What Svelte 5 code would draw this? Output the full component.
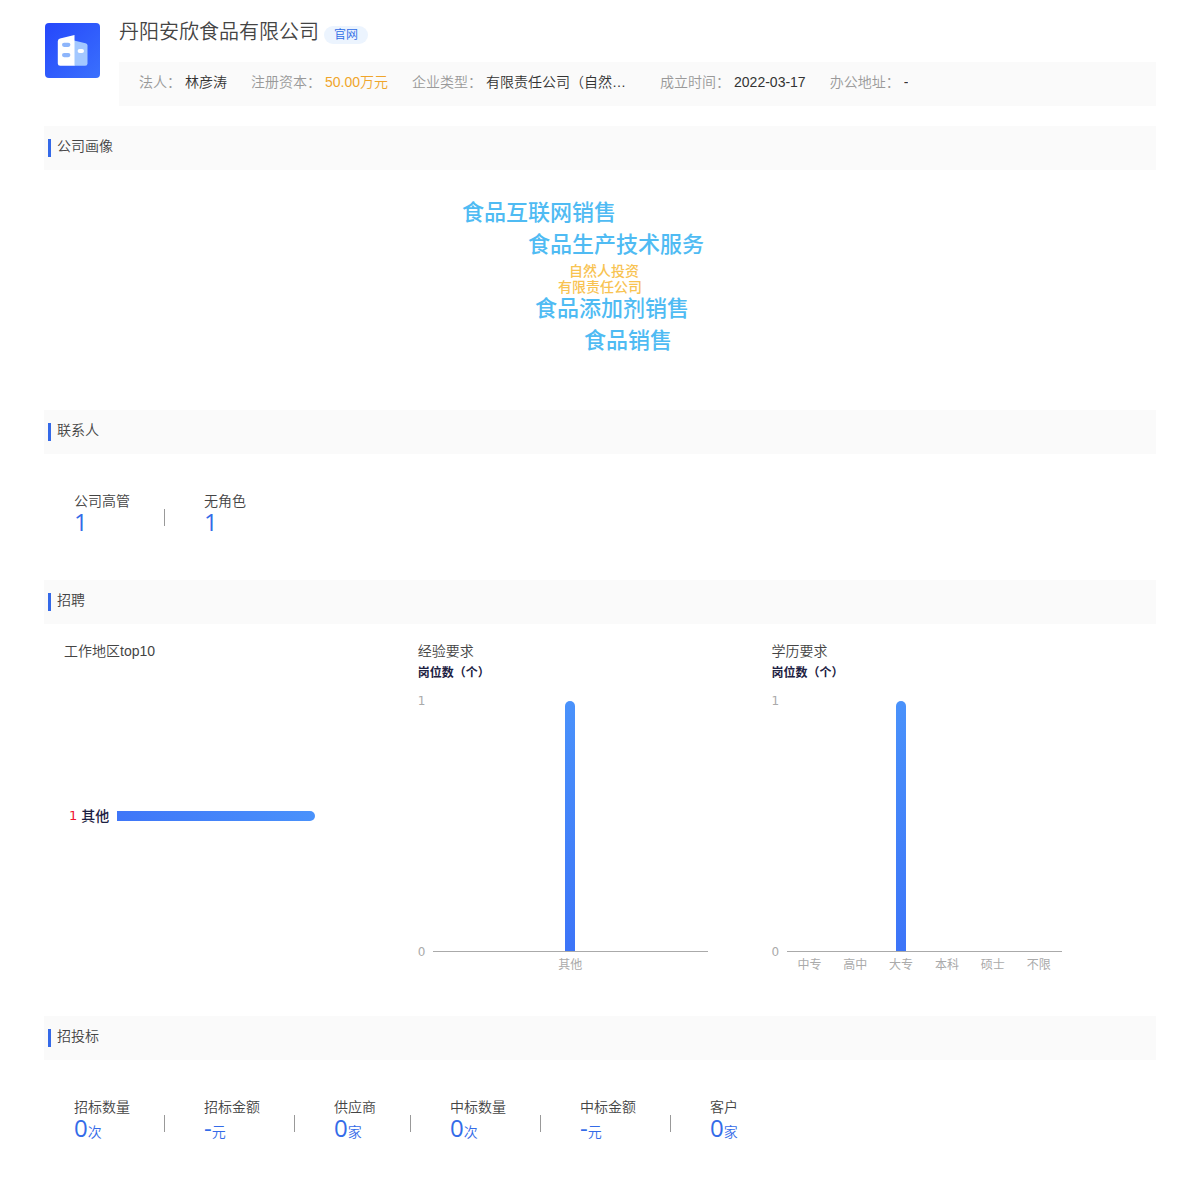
<script lang="ts">
  interface Stat {
    label: string;
    value: string;
    unit?: string;
  }

  const company = {
    name: "丹阳安欣食品有限公司",
    info: [
      { label: "法人", value: "林彦涛" },
      { label: "注册资本", value: "50.00万元", money: true },
      { label: "企业类型", value: "有限责任公司（自然人）" },
      { label: "成立时间", value: "2022-03-17" },
      { label: "办公地址", value: "-" },
    ],
  };

  // x is measured from the middle of the cloud, y from its top
  const words = [
    { text: "食品互联网销售", x: -138, y: 27, major: true },
    { text: "食品生产技术服务", x: -72, y: 59, major: true },
    { text: "自然人投资", x: -31, y: 85, major: false },
    { text: "有限责任公司", x: -42, y: 101, major: false },
    { text: "食品添加剂销售", x: -65, y: 123, major: true },
    { text: "食品销售", x: -16, y: 155, major: true },
  ];

  const contacts: Stat[] = [
    { label: "公司高管", value: "1" },
    { label: "无角色", value: "1" },
  ];

  const bids: Stat[] = [
    { label: "招标数量", value: "0", unit: "次" },
    { label: "招标金额", value: "-", unit: "元" },
    { label: "供应商", value: "0", unit: "家" },
    { label: "中标数量", value: "0", unit: "次" },
    { label: "中标金额", value: "-", unit: "元" },
    { label: "客户", value: "0", unit: "家" },
  ];

  const regions = [{ name: "其他", count: 1 }];

  const columnCharts = [
    { title: "经验要求", data: [{ name: "其他", count: 1 }] },
    {
      title: "学历要求",
      data: [
        { name: "中专", count: 0 },
        { name: "高中", count: 0 },
        { name: "大专", count: 1 },
        { name: "本科", count: 0 },
        { name: "硕士", count: 0 },
        { name: "不限", count: 0 },
      ],
    },
  ];

  const maxRegion = Math.max(...regions.map((r) => r.count));
</script>

{#snippet sectionTitle(text: string)}
  <h2 class="section-title">{text}</h2>
{/snippet}

{#snippet statRow(stats: Stat[])}
  <dl class="stats">
    {#each stats as stat (stat.label)}
      <div class="stat">
        <dt>{stat.label}</dt>
        <dd>{stat.value}{#if stat.unit}<small>{stat.unit}</small>{/if}</dd>
      </div>
    {/each}
  </dl>
{/snippet}

<main class="page">
  <header class="header">
    <svg class="logo" viewBox="0 0 55 55" aria-hidden="true">
      <defs>
        <linearGradient id="logo-bg" x1="0" y1="0" x2="1" y2="1">
          <stop offset="0" stop-color="#2547fb" />
          <stop offset="1" stop-color="#3a70fd" />
        </linearGradient>
      </defs>
      <rect width="55" height="55" rx="4" fill="url(#logo-bg)" />
      <path d="M29 17.5 L40.5 20.2 Q42.5 20.7 42.5 22.5 V40.5 Q42.5 42.8 40.2 42.8 H29 Z" fill="#a3c8ff" />
      <path d="M15 15.6 L29.5 11.9 V42.8 H15.2 Q12.8 42.8 12.8 40.4 V18.2 Q12.8 16.1 15 15.6 Z" fill="#fff" />
      <rect x="17" y="19.7" width="8.4" height="4.2" rx="2.1" fill="#8db5fb" />
      <rect x="17" y="30" width="8.4" height="4.2" rx="2.1" fill="#8db5fb" />
      <rect x="32.6" y="26" width="6.4" height="4" rx="2" fill="#fff" />
    </svg>
    <div class="summary">
      <div class="name-row">
        <h1>{company.name}</h1>
        <a class="site" href="#site">官网</a>
      </div>
      <dl class="info">
        {#each company.info as item (item.label)}
          <div class="info-item">
            <dt>{item.label}：</dt>
            <dd class:money={item.money}>{item.value}</dd>
          </div>
        {/each}
      </dl>
    </div>
  </header>

  <section>
    {@render sectionTitle("公司画像")}
    <div class="cloud">
      {#each words as word (word.text)}
        <span
          class="word"
          class:major={word.major}
          style={`left: calc(50% + ${word.x}px); top: ${word.y}px`}
        >{word.text}</span>
      {/each}
    </div>
  </section>

  <section>
    {@render sectionTitle("联系人")}
    {@render statRow(contacts)}
  </section>

  <section>
    {@render sectionTitle("招聘")}
    <div class="charts">
      <div class="chart">
        <h3>工作地区top10</h3>
        <div class="hbars">
          {#each regions as region (region.name)}
            <div class="hbar-row">
              <span class="hbar-count">{region.count}</span>
              <span class="hbar-name">{region.name}</span>
              <div class="hbar-track">
                <div class="hbar" style={`width: ${(region.count / maxRegion) * 100}%`}></div>
              </div>
            </div>
          {/each}
        </div>
      </div>

      {#each columnCharts as chart (chart.title)}
        <div class="chart">
          <h3>{chart.title}</h3>
          <p class="unit">岗位数（个）</p>
          <div class="vchart">
            <div class="y-axis"><span>1</span><span>0</span></div>
            <div class="plot">
              {#each chart.data as item (item.name)}
                <div class="slot">
                  <div class="vbar" style={`height: ${item.count * 100}%`}></div>
                </div>
              {/each}
            </div>
            <div class="x-axis">
              {#each chart.data as item (item.name)}
                <span>{item.name}</span>
              {/each}
            </div>
          </div>
        </div>
      {/each}
    </div>
  </section>

  <section>
    {@render sectionTitle("招投标")}
    {@render statRow(bids)}
  </section>
</main>

<style>
  :global(body) {
    margin: 0;
    background: #fff;
  }
  .page {
    padding: 20px 44px 0;
    font-family: "Liberation Sans", "Noto Sans CJK SC", sans-serif;
    font-size: 14px;
    font-weight: 350;
    line-height: 20px;
    color: #444;
  }
  h1,
  h2,
  h3,
  p,
  dl,
  dd {
    margin: 0;
    font-weight: 350;
  }

  .header {
    display: flex;
    gap: 19px;
    padding-left: 1px;
    margin-bottom: 20px;
  }
  .logo {
    flex: none;
    width: 55px;
    height: 55px;
    margin-top: 3px;
  }
  .summary {
    flex: 1;
    min-width: 0;
  }
  .name-row {
    display: flex;
    align-items: flex-start;
    gap: 5px;
    height: 42px;
  }
  h1 {
    font-size: 20px;
    line-height: 24px;
  }
  .site {
    margin-top: 6px;
    padding: 0 10px;
    border-radius: 9px;
    background: #ecf4fe;
    color: #2e6be6;
    font-size: 12px;
    line-height: 18px;
    text-decoration: none;
  }
  .info {
    display: flex;
    gap: 24px;
    padding: 10px 20px 14px;
    background: #fafafa;
  }
  .info-item {
    display: flex;
    gap: 4px;
  }
  .info dt {
    color: #999;
    white-space: nowrap;
  }
  .info dd {
    max-width: 150px;
    overflow: hidden;
    text-overflow: ellipsis;
    white-space: nowrap;
    color: #333;
  }
  .info dd.money {
    color: #f0a52b;
  }

  .section-title {
    display: flex;
    align-items: center;
    gap: 6px;
    padding: 10px 4px 14px;
    background: #fafafa;
    font-size: 14px;
  }
  .section-title::before {
    content: "";
    width: 3px;
    height: 18px;
    margin-top: 3px;
    margin-bottom: -1px;
    background: #3469e8;
  }

  .cloud {
    position: relative;
    height: 240px;
  }
  .word {
    position: absolute;
    color: #f8c352;
    font-weight: 500;
    line-height: 32px;
    white-space: nowrap;
  }
  .word.major {
    color: #4fbbf3;
    font-size: 22px;
  }

  .stats {
    display: flex;
    padding: 38px 30px 46px;
  }
  .stat {
    display: flex;
    flex-direction: column;
    position: relative;
  }
  .stat + .stat {
    margin-left: 34px;
    padding-left: 40px;
  }
  .stat + .stat::before {
    content: "";
    position: absolute;
    left: 0;
    top: 17px;
    width: 1px;
    height: 17px;
    background: #999;
  }
  .stat dt {
    line-height: 18px;
  }
  .stat dd {
    color: #346be8;
    font-family: "Open Sans", "Noto Sans CJK SC", sans-serif;
    font-size: 24px;
    font-weight: 400;
    line-height: 24px;
  }
  .stat small {
    font-size: 14px;
    font-weight: 350;
  }

  .charts {
    display: flex;
    padding: 17px 20px 41px;
  }
  .chart {
    display: flex;
    flex-direction: column;
    width: 33%;
  }
  h3 {
    font-size: 14px;
  }
  .unit {
    color: #1d2142;
    font-size: 12px;
    font-weight: 600;
    line-height: 24px;
  }
  .hbars {
    flex: 1;
    display: flex;
    flex-direction: column;
    justify-content: space-around;
    width: 71%;
    padding-bottom: 4px;
  }
  .hbar-row {
    display: flex;
    align-items: center;
    padding-left: 5px;
  }
  .hbar-count {
    color: #f0142f;
    font-family: "DejaVu Sans", sans-serif;
    font-size: 13px;
    font-weight: 400;
  }
  .hbar-name {
    margin: 0 8px 0 4px;
    color: #1d2142;
    font-weight: 500;
  }
  .hbar-track {
    flex: 1;
  }
  .hbar {
    height: 10px;
    border-radius: 0 5px 5px 0;
    background: linear-gradient(90deg, #3f76f8, #4a92fb);
  }

  .vchart {
    display: grid;
    grid-template-columns: 15px 1fr;
    width: 82%;
    padding-top: 16px;
    color: #aaa;
    font-size: 12px;
    font-weight: 400;
  }
  .y-axis {
    display: flex;
    flex-direction: column;
    justify-content: space-between;
    margin: -10px 0;
    font-family: "DejaVu Sans", sans-serif;
  }
  .plot {
    display: flex;
    height: 250px;
    border-bottom: 1px solid #aaa;
  }
  .slot {
    flex: 1;
    display: flex;
    align-items: flex-end;
    justify-content: center;
  }
  .vbar {
    width: 10px;
    border-radius: 5px 5px 0 0;
    background: linear-gradient(#4a92fb, #3c74f8);
  }
  .x-axis {
    grid-column: 2;
    display: flex;
    padding-top: 3px;
  }
  .x-axis span {
    flex: 1;
    text-align: center;
  }
</style>
